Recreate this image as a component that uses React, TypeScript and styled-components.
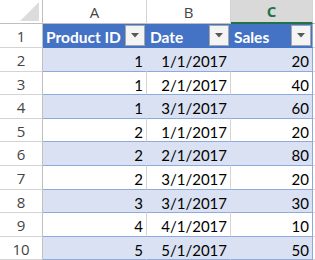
import { FC } from "react";
import styled, { createGlobalStyle } from "styled-components";

const GlobalStyle = createGlobalStyle`
  html, body {
    margin: 0;
    padding: 0;
    background: #fff;
  }
`;

const rowHeights = [24, 24, 24, 23, 24, 23, 24, 24, 23, 24, 23];

const Sheet = styled.div`
  display: grid;
  grid-template-columns: 43px 104px 84px 82px 1fr;
  grid-template-rows: ${rowHeights.map((h) => `${h}px`).join(" ")};
  width: 315px;
  height: 260px;
  overflow: hidden;
  background: #fff;
`;

const Corner = styled.div`
  box-sizing: border-box;
  border-right: 1px solid #bfbfbf;
  border-bottom: 1px solid #bfbfbf;

  svg {
    display: block;
  }
`;

const ColHead = styled.div<{ $selected?: boolean }>`
  box-sizing: border-box;
  display: flex;
  align-items: center;
  justify-content: center;
  font-family: "Open Sans", "DejaVu Sans", sans-serif;
  font-size: 15px;
  color: ${({ $selected }) => ($selected ? "#217346" : "#444")};
  font-weight: ${({ $selected }) => ($selected ? 700 : 400)};
  background: ${({ $selected }) => ($selected ? "#d9d9d9" : "#fff")};
  border-right: 1px solid #d4d4d4;
  border-bottom: ${({ $selected }) => ($selected ? "2px solid #217346" : "1px solid #bfbfbf")};
`;

const HeadFiller = styled.div`
  box-sizing: border-box;
  border-bottom: 1px solid #bfbfbf;
`;

const RowHead = styled.div`
  box-sizing: border-box;
  display: flex;
  align-items: center;
  justify-content: center;
  padding-top: 1px;
  font-family: "Open Sans", "DejaVu Sans", sans-serif;
  font-size: 15px;
  color: #444;
  border-right: 1px solid #bfbfbf;
  border-bottom: 1px solid #d4d4d4;
`;

const TitleCell = styled.div<{ $last?: boolean }>`
  box-sizing: border-box;
  display: flex;
  align-items: center;
  justify-content: space-between;
  padding: 0 1px 0 3px;
  white-space: nowrap;
  background: #4472c4;
  color: #fff;
  font-family: Lato, "Liberation Sans", sans-serif;
  font-weight: 700;
  font-size: 15.5px;
  border-right: 1px solid ${({ $last }) => ($last ? "#8ea9db" : "#4472c4")};
  border-bottom: 1px solid #4472c4;
`;

const TitleText = styled.span`
  padding-top: 2px;
`;

const DropButton = styled.span`
  box-sizing: border-box;
  width: 20px;
  height: 21px;
  flex-shrink: 0;
  display: flex;
  align-items: center;
  justify-content: center;
  background: #f4f4f4;
  border: 1px solid #a6a6a6;

  svg {
    display: block;
  }
`;

const DataCell = styled.div<{ $band?: boolean; $last?: boolean }>`
  box-sizing: border-box;
  display: flex;
  align-items: center;
  justify-content: flex-end;
  padding: 3px 3px 0 0;
  white-space: nowrap;
  background: ${({ $band }) => ($band ? "#d9e1f2" : "#fff")};
  color: #000;
  font-family: Lato, "Liberation Sans", sans-serif;
  font-size: 15px;
  border-right: 1px solid
    ${({ $band, $last }) => ($last ? "#8ea9db" : $band ? "#d9e1f2" : "#d4d4d4")};
  border-bottom: 1px solid #8ea9db;
`;

const Blank = styled.div`
  box-sizing: border-box;
  border-bottom: 1px solid #d4d4d4;
`;

const rows = [
  { id: 1, date: "1/1/2017", sales: 20 },
  { id: 1, date: "2/1/2017", sales: 40 },
  { id: 1, date: "3/1/2017", sales: 60 },
  { id: 2, date: "1/1/2017", sales: 20 },
  { id: 2, date: "2/1/2017", sales: 80 },
  { id: 2, date: "3/1/2017", sales: 20 },
  { id: 3, date: "3/1/2017", sales: 30 },
  { id: 4, date: "4/1/2017", sales: 10 },
  { id: 5, date: "5/1/2017", sales: 50 },
];

const Dropdown: FC = () => (
  <DropButton>
    <svg width="8" height="5" viewBox="0 0 8 5">
      <polygon points="0,0 8,0 4,4.5" fill="#595959" />
    </svg>
  </DropButton>
);

const App: FC = () => (
  <>
    <GlobalStyle />
    <Sheet>
      <Corner>
        <svg width="42" height="23">
          <polygon points="39,2 39,21 20,21" fill="#dcdcdc" />
        </svg>
      </Corner>
      <ColHead>A</ColHead>
      <ColHead>B</ColHead>
      <ColHead $selected>C</ColHead>
      <HeadFiller />

      <RowHead>1</RowHead>
      <TitleCell>
        <TitleText>Product ID</TitleText>
        <Dropdown />
      </TitleCell>
      <TitleCell>
        <TitleText>Date</TitleText>
        <Dropdown />
      </TitleCell>
      <TitleCell $last>
        <TitleText>Sales</TitleText>
        <Dropdown />
      </TitleCell>
      <Blank />

      {rows.map((r, i) => {
        const band = i % 2 === 0;
        return [
          <RowHead key={`h${i}`}>{i + 2}</RowHead>,
          <DataCell key={`a${i}`} $band={band}>
            {r.id}
          </DataCell>,
          <DataCell key={`b${i}`} $band={band}>
            {r.date}
          </DataCell>,
          <DataCell key={`c${i}`} $band={band} $last>
            {r.sales}
          </DataCell>,
          <Blank key={`x${i}`} />,
        ];
      })}
    </Sheet>
  </>
);

export default App;
